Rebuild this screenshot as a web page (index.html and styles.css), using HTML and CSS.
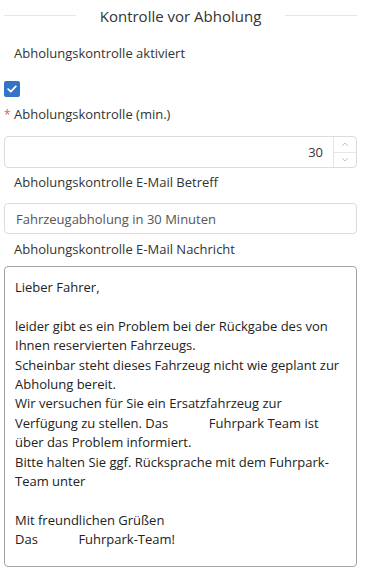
FILE: index.html
```html
<!DOCTYPE html>
<html lang="de">
<head>
  <meta charset="utf-8">
  <title>Kontrolle vor Abholung</title>
  <link rel="stylesheet" href="styles.css">
</head>
<body>
<div class="panel">

  <div class="section-title">
    <span class="rule"></span>
    <span class="title-text">Kontrolle vor Abholung</span>
    <span class="rule"></span>
  </div>

  <div class="field field-check">
    <div class="label">Abholungskontrolle aktiviert</div>
    <span class="checkbox">
      <svg width="10" height="8" viewBox="0 0 10 8">
        <path d="M1.2 4.2 L3.8 6.6 L8.8 1.4" fill="none" stroke="#fff" stroke-width="1.8" stroke-linecap="round" stroke-linejoin="round"/>
      </svg>
    </span>
  </div>

  <div class="field field-number">
    <div class="label label-req"><span class="req">*</span>Abholungskontrolle (min.)</div>
    <div class="number-box">
      <div class="number-value">30</div>
      <div class="spinner">
        <span class="spin-btn">
          <svg width="8" height="5" viewBox="0 0 8 5"><path d="M1 4 L4 1 L7 4" fill="none" stroke="#c8c8c8" stroke-width="1"/></svg>
        </span>
        <span class="spin-btn">
          <svg width="8" height="5" viewBox="0 0 8 5"><path d="M1 1 L4 4 L7 1" fill="none" stroke="#c8c8c8" stroke-width="1"/></svg>
        </span>
      </div>
    </div>
  </div>

  <div class="field field-subject">
    <div class="label">Abholungskontrolle E-Mail Betreff</div>
    <input class="text-input" type="text" value="Fahrzeugabholung in 30 Minuten">
  </div>

  <div class="field field-message">
    <div class="label">Abholungskontrolle E-Mail Nachricht</div>
    <textarea class="message">Lieber Fahrer,

leider gibt es ein Problem bei der Rückgabe des von Ihnen reservierten Fahrzeugs.
Scheinbar steht dieses Fahrzeug nicht wie geplant zur Abholung bereit.
Wir versuchen für Sie ein Ersatzfahrzeug zur Verfügung zu stellen. Das            Fuhrpark Team ist über das Problem informiert.
Bitte halten Sie ggf. Rücksprache mit dem Fuhrpark-Team unter

Mit freundlichen Grüßen
Das            Fuhrpark-Team!</textarea>
  </div>

</div>
</body>
</html>
```

FILE: styles.css
```css
body {
  margin: 0;
  background: #fff;
  font-family: "Open Sans", "Liberation Sans", sans-serif;
  font-size: 13px;
  color: #333;
}

.panel {
  width: 353px;
  margin-left: 4px;
}

/* heading with a thin rule on both sides */
.section-title {
  display: flex;
  align-items: center;
  gap: 24px;
  height: 30px;
}

.rule {
  flex: 1;
  height: 1px;
  background: #e6e6e6;
}

.title-text {
  font-size: 15px;
  color: #333;
  line-height: 30px;
  margin-top: 1px;
}

.field {
  display: flex;
  flex-direction: column;
}

.label {
  padding-left: 10px;
  line-height: 20px;
}

.field-check .label {
  margin-top: 13px;
  margin-bottom: 18px;
}

.checkbox {
  width: 16px;
  height: 16px;
  border-radius: 2px;
  background: #3274c8;
  display: flex;
  align-items: center;
  justify-content: center;
}

.field-number .label {
  margin-top: 7px;
  margin-bottom: 11px;
}

.label-req {
  padding-left: 0;
}

.req {
  color: #e4595a;
  display: inline-block;
  width: 10px;
  font-size: 12px;
}

.number-box {
  display: flex;
  height: 32px;
  box-sizing: border-box;
  border: 1px solid #dcdcdc;
  border-radius: 4px;
}

.number-value {
  flex: 1;
  text-align: right;
  line-height: 30px;
  padding-right: 10px;
  color: #333;
}

.spinner {
  width: 22px;
  display: flex;
  flex-direction: column;
  border-left: 1px solid #e6e6e6;
}

.spin-btn {
  flex: 1;
  display: flex;
  align-items: center;
  justify-content: center;
}

.spin-btn + .spin-btn {
  border-top: 1px solid #e6e6e6;
}

.field-subject .label {
  margin-top: 4px;
  margin-bottom: 11px;
}

.text-input {
  display: block;
  box-sizing: border-box;
  width: 100%;
  height: 31px;
  margin: 0;
  padding: 0 11px;
  border: 1px solid #dcdcdc;
  border-radius: 4px;
  font-family: inherit;
  font-size: 13px;
  color: #555;
  outline: none;
}

.field-message .label {
  margin-top: 5px;
  margin-bottom: 7px;
}

.message {
  display: block;
  box-sizing: border-box;
  width: 100%;
  height: 301px;
  margin: 0;
  padding: 11px 10px 10px;
  border: 1px solid #a3a3a3;
  border-radius: 4px;
  font-family: inherit;
  font-size: 13px;
  line-height: 19.4px;
  color: #222;
  resize: none;
  overflow: hidden;
  outline: none;
}
```
